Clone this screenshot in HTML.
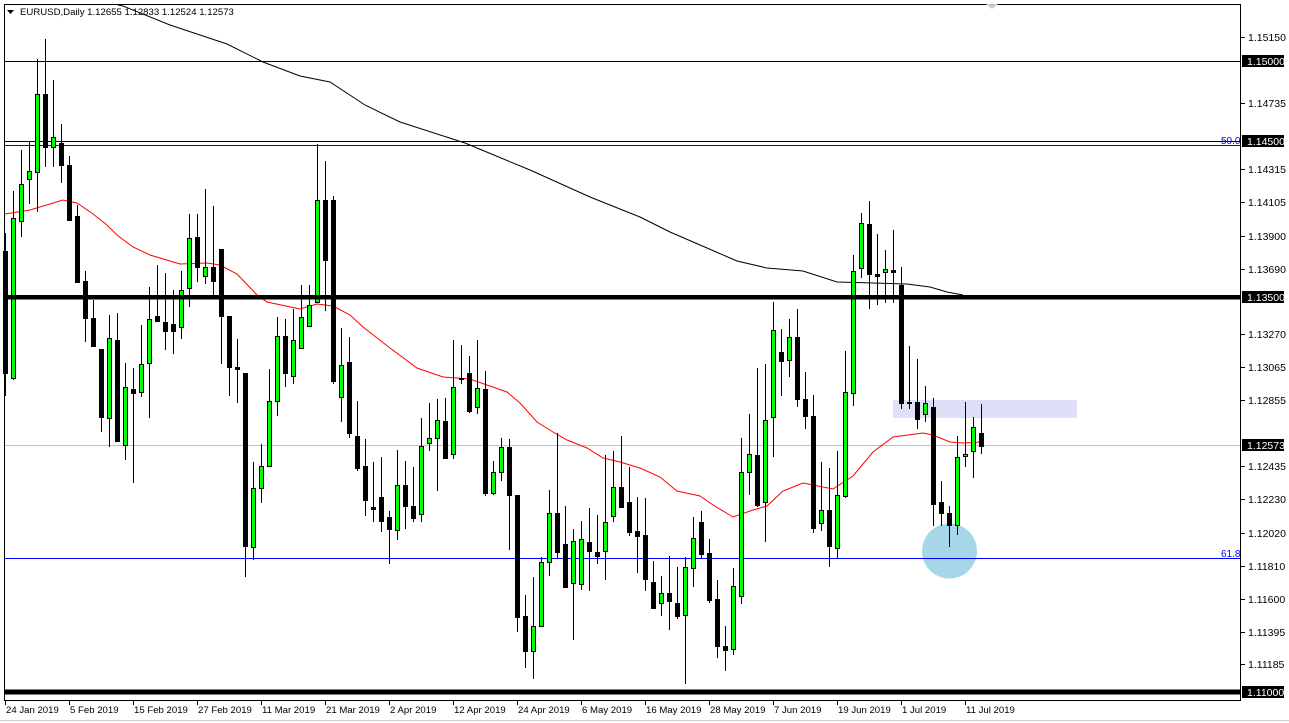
<!DOCTYPE html>
<html><head><meta charset="utf-8"><style>
html,body{margin:0;padding:0;background:#fff;}
body{width:1289px;height:723px;overflow:hidden;position:relative;font-family:"Liberation Sans",Tahoma,sans-serif;}
svg{position:absolute;left:0;top:0;}
text{font-family:"Liberation Sans",Tahoma,sans-serif;font-size:10.5px;fill:#000;}
</style></head><body>
<svg id="s" width="1289" height="723" viewBox="0 0 1289 723" xmlns="http://www.w3.org/2000/svg">
<rect x="0" y="0" width="1289" height="723" fill="#fff"/>
<rect x="4.5" y="4.5" width="1236" height="696" fill="none" stroke="#000" stroke-width="1"/>
<line x1="0" y1="720.5" x2="1289" y2="720.5" stroke="#ccc"/>
<rect x="893" y="400" width="184" height="18" fill="#dcdcf6" opacity="0.9"/>
<circle cx="949.5" cy="551" r="27.5" fill="#a6d7e8"/>
<line x1="5" y1="61.5" x2="1240" y2="61.5" stroke="#000"/>
<line x1="5" y1="141.5" x2="1240" y2="141.5" stroke="#000"/>
<line x1="5" y1="145.5" x2="1240" y2="145.5" stroke="#0000ff"/>
<line x1="5" y1="445.5" x2="1240" y2="445.5" stroke="#c0c0c0"/>
<line x1="5" y1="558.5" x2="1240" y2="558.5" stroke="#0000ff"/>
<text x="1221" y="144" style="fill:#0000ff;font-size:10px">50.0</text>
<text x="1221" y="557" style="fill:#0000ff;font-size:10px">61.8</text>
<g id="ma"></g>
<g id="c"></g>
<rect x="5" y="295" width="1236" height="4.5" fill="#000"/>
<rect x="5" y="689.5" width="1236" height="5" fill="#000"/>
<path d="M7 10 L14 10 L10.5 14 Z" fill="#000"/>
<text x="20" y="15" style="font-size:9.6px">EURUSD,Daily  1.12655 1.12833 1.12524 1.12573</text>
<g id="ax"></g>
<path d="M986 4 L998 4 L992 9 Z" fill="#c8c8c8"/>
</svg>
<script>
var NS="http://www.w3.org/2000/svg";
function el(p,t,a){var e=document.createElementNS(NS,t);for(var k in a)e.setAttribute(k,a[k]);p.appendChild(e);return e;}
var g=document.getElementById('c');
function X(i){return 5.3+8*i;}
var C=[];
var z1=[["b",545,810,505,858],["g",473,820,415,822],["g",400,480,325,512],["g",372,388,305,440],["g",205,373,128,457],["b",205,318,85,360],["g",298,318,173,360],["b",310,357,270,395],["b",357,478,338,478],["b",468,612,445,612],["b",610,690,587,740],["b",690,750,652,750],["b",758,905,758,935],["g",733,908,683,967],["b",737,958,680,958],["g",840,965,787,997],["b",845,852,798,1047],["g",790,850,705,860],["g",692,788,622,905],["b",685,697,575,697],["b",698,718,593,758],["b",703,718,630,767],["g",630,710,588,733],["g",517,625,465,665],["b",515,580,465,610],["g",580,600,410,615],["b",580,610,447,640],["b",540,686,540,788],["b",685,797,685,857],["b",797,800,735,873],["b",810,1185,810,1250],["g",1058,1188,1003,1212],["g",1012,1060,963,1090],["g",870,1012,800,1012],["g",730,870,687,900],["b",730,810,692,838],["g",738,817,670,832],["g",688,755,618,755],["g",662,707,618,707],["g",435,655,313,655],["b",435,565,350,673]];
z1.forEach(function(d,i){C.push([i,d[0],d[1]/2.17,d[2]/2.17,d[3]/2.17,d[4]/2.17]);});
C.push([41,"b",200,381,196,383]);
var z2=[["g",195,290,85,362],["b",187,400,110,410],["b",408,503,303,510],["b",498,600,418,645],["b",622,628,487,662],["b",590,662,470,692],["b",652,688,633,788],["g",555,690,450,717],["b",555,617,483,683],["b",618,653,500,662],["g",438,643,353,662],["g",413,430,310,450],["g",360,415,297,570],["b",363,473,295,473],["g",262,463,120,473],["b",233,236,135,248],["b",218,332,168,335],["g",265,322,120,338],["b",267,578,213,585],["g",517,580,483,582],["g",442,517,413,540],["b",442,585,417,747],["b",585,950,585,992],["b",948,1052,885,1100],["g",978,1052,830,1135],["g",787,978,772,978],["g",640,785,570,825],["b",640,755,400,770],["b",733,860,618,860],["g",723,850,687,1017],["g",718,853,662,868],["b",727,752,625,870],["b",757,767,645,790],["g",667,753,465,837],["g",562,648,453,662],["b",562,620,408,620],["b",607,695,500,705],["b",693,707,590,815]];
z2.forEach(function(d,j){C.push([42+j,d[0],300+d[1]/3,300+d[2]/3,300+d[3]/3,300+d[4]/3]);});
var z3=[["b",1015,1143,905,1175],["b",1153,1228,1090,1228],["g",1185,1215,1135,1250],["b",1185,1208,1075,1290],["b",1213,1252,1108,1258],["g",1108,1250,1078,1450],["g",1022,1112,962,1165],["b",975,1070,945,1078],["b",1068,1205,1027,1210],["b",1203,1342,1147,1372],["b",1340,1352,1283,1410],["g",1165,1350,1112,1365],["g",828,1195,730,1213],["g",777,828,658,895],["b",780,925,523,930],["g",675,918,513,1032],["g",413,668,328,782],["b",475,502,410,602],["g",433,500,380,548],["b",433,613,350,635],["b",613,663,535,700],["b",663,995,603,1005],["g",940,980,800,1000],["b",940,1048,818,1105],["g",898,1053,768,1078],["g",595,900,473,902],["g",238,598,190,633],["g",98,228,68,255],["b",100,248,33,348],["b",248,254,128,335],["g",233,242,175,330],["b",235,240,118,330],["b",280,625,225,642],["b",622,626,460,640],["b",622,672,497,700],["g",627,660,577,680],["b",638,922,612,985],["b",918,950,857,985],["b",950,985,930,1048],["g",785,985,722,1012],["g",777,783,622,810],["g",698,768,668,843],["b",713,752,628,773]];
z3.forEach(function(d,k){var f=2.94;C.push([80+k,d[0],190+d[1]/f,190+d[2]/f,190+d[3]/f,190+d[4]/f]);});
C.forEach(function(c){
 var x=Math.round(X(c[0]));
 var bt=Math.round(c[2]),bb=Math.round(c[3]),wt=Math.round(c[4]),wb=Math.round(c[5]);
 if(bb-bt<1)bb=bt+1;
 el(g,'line',{x1:x+0.5,y1:wt,x2:x+0.5,y2:wb+1,stroke:'#000','stroke-width':1});
 if(c[1]=="g"){el(g,'rect',{x:x-1.5,y:bt+0.5,width:4,height:Math.max(bb-bt,1),fill:'#00ff00',stroke:'#000','stroke-width':1});}
 else{el(g,'rect',{x:x-2,y:bt,width:5,height:Math.max(bb-bt+1,2),fill:'#000'});}
});
var ma=document.getElementById('ma');
var red=[[5,214],[30,210],[63,200],[77,203],[93,214],[107,225],[117,235],[133,247],[150,255],[180,264],[207,263],[220,265],[237,274],[257,295],[267,302],[300,309],[317,304],[333,306],[350,315],[363,327],[390,348],[417,368],[443,377],[470,379],[487,385],[507,392],[520,403],[537,422],[553,432],[567,440],[587,448],[603,458],[620,462],[640,468],[660,477],[677,491],[700,496],[713,505],[733,517],[753,510],[767,506],[783,491],[803,483],[833,489],[853,476],[873,452],[893,437],[923,433],[933,435],[950,442],[963,443],[980,442]];
var blk=[[118,5],[123,6],[170,25],[200,35],[227,44],[263,62],[300,76],[330,82],[365,105],[400,122],[465,143],[530,170],[590,197],[640,217],[670,232],[707,248],[737,261],[767,268],[803,271],[837,282],[873,283],[907,284],[930,287],[947,292],[963,295]];
function pl(p){return p.map(function(q){return q[0]+","+q[1];}).join(" ");}
el(ma,'polyline',{points:pl(red),fill:'none',stroke:'#ff0000','stroke-width':1});
el(ma,'polyline',{points:pl(blk),fill:'none',stroke:'#000','stroke-width':1});
var ax=document.getElementById('ax');
var labs=[[37,"1.15150"],[103,"1.14735"],[169,"1.14315"],[202,"1.14105"],[236,"1.13900"],[269,"1.13690"],[334,"1.13270"],[367,"1.13065"],[400,"1.12855"],[466,"1.12435"],[499,"1.12230"],[533,"1.12020"],[566,"1.11810"],[599,"1.11600"],[632,"1.11395"],[664,"1.11185"]];
labs.forEach(function(l){el(ax,'line',{x1:1241,y1:l[0]+0.5,x2:1245,y2:l[0]+0.5,stroke:'#000'});var t=el(ax,'text',{x:1248,y:l[0]+4});t.textContent=l[1];});
var box=[[61,"1.15000"],[141,"1.14500"],[297,"1.13500"],[445,"1.12573"],[692,"1.11000"]];
box.forEach(function(l){el(ax,'rect',{x:1242,y:l[0]-6,width:42,height:12,fill:'#000'});var t=el(ax,'text',{x:1247,y:l[0]+4,style:'fill:#fff'});t.textContent=l[1];});
var dates=["24 Jan 2019","5 Feb 2019","15 Feb 2019","27 Feb 2019","11 Mar 2019","21 Mar 2019","2 Apr 2019","12 Apr 2019","24 Apr 2019","6 May 2019","16 May 2019","28 May 2019","7 Jun 2019","19 Jun 2019","1 Jul 2019","11 Jul 2019"];
dates.forEach(function(d,i){var x=5+64*i;el(ax,'line',{x1:x+0.5,y1:700,x2:x+0.5,y2:705,stroke:'#000'});var t=el(ax,'text',{x:x+1,y:713,style:'font-size:9.6px'});t.textContent=d;});
</script>
</body></html>
